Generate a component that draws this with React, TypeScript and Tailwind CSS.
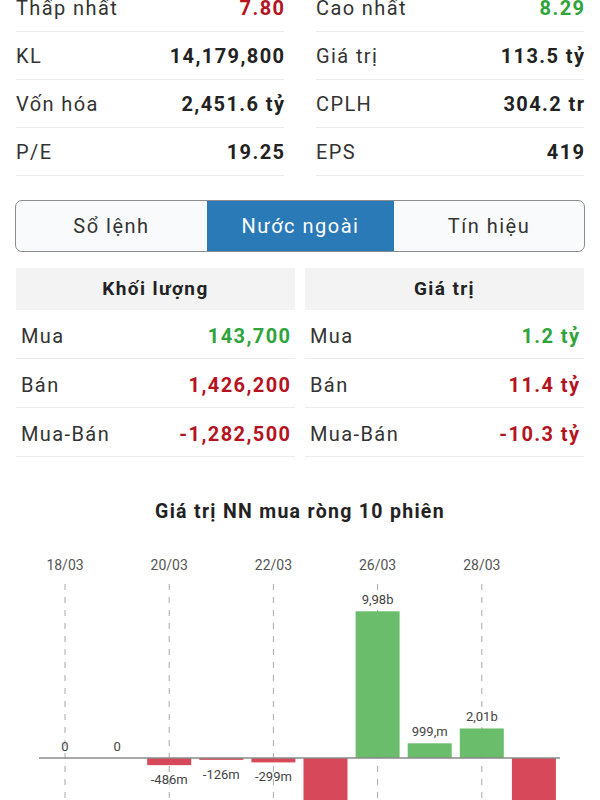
import React from "react";

const RED = "#b5141f";
const GREEN = "#2ea43a";

type Stat = { label: string; value: string; color?: string };

const left: Stat[] = [
  { label: "Thấp nhất", value: "7.80", color: RED },
  { label: "KL", value: "14,179,800" },
  { label: "Vốn hóa", value: "2,451.6 tỷ" },
  { label: "P/E", value: "19.25" },
];
const right: Stat[] = [
  { label: "Cao nhất", value: "8.29", color: GREEN },
  { label: "Giá trị", value: "113.5 tỷ" },
  { label: "CPLH", value: "304.2 tr" },
  { label: "EPS", value: "419" },
];

function StatCol({ items }: { items: Stat[] }) {
  return (
    <div className="flex flex-col">
      {items.map((s) => (
        <div
          key={s.label}
          className="flex h-[48px] items-center justify-between border-b border-[#ececec]"
        >
          <span className="text-[20px] tracking-[1.4px] text-[#333]">{s.label}</span>
          <span
            className="-mr-[1.4px] text-[20px] font-bold tracking-[1.4px] text-[#222]"
            style={s.color ? { color: s.color } : undefined}
          >
            {s.value}
          </span>
        </div>
      ))}
    </div>
  );
}

type Row = { label: string; value: string; color: string };

function FlowTable({ title, rows }: { title: string; rows: Row[] }) {
  return (
    <div className="flex flex-col">
      <div className="flex h-[42px] items-center justify-center bg-[#f3f3f3] text-[19px] font-bold tracking-[1.4px] text-[#222]">
        {title}
      </div>
      {rows.map((r) => (
        <div
          key={r.label}
          className="flex h-[49px] items-center justify-between border-b border-[#ececec] px-[5px] pt-[4px]"
        >
          <span className="text-[20px] tracking-[1.4px] text-[#333]">{r.label}</span>
          <span
            className="-mr-[1.4px] text-[20px] font-bold tracking-[1.4px]"
            style={{ color: r.color }}
          >
            {r.value}
          </span>
        </div>
      ))}
    </div>
  );
}

const bars = [0, 0, -0.486, -0.126, -0.299, -4.5, 9.98, 0.999, 2.01, -4.5];
const barLabels = ["0", "0", "-486m", "-126m", "-299m", "", "9,98b", "999,m", "2,01b", ""];
const dates: [number, string][] = [
  [0, "18/03"],
  [2, "20/03"],
  [4, "22/03"],
  [6, "26/03"],
  [8, "28/03"],
];

function Chart() {
  const base = 228;
  const scale = 14.7;
  const cx = (i: number) => 65 + 52.1 * i;
  return (
    <svg width="600" height="280" viewBox="0 0 600 280" className="block">
      {dates.map(([i, d]) => (
        <g key={d}>
          <text
            x={cx(i)}
            y={40}
            textAnchor="middle"
            fontSize="14"
            fill="#555"
            fontFamily="Roboto, sans-serif"
          >
            {d}
          </text>
          <line
            x1={cx(i)}
            x2={cx(i)}
            y1={54}
            y2={280}
            stroke="#a8a8a8"
            strokeWidth="1"
            strokeDasharray="6 7"
          />
        </g>
      ))}
      {bars.map((v, i) => {
        const h = Math.abs(v) * scale;
        const y = v >= 0 ? base - h : base;
        return (
          <rect
            key={i}
            x={cx(i) - 22}
            y={y}
            width={44}
            height={h}
            fill={v >= 0 ? "#6abd6a" : "#d6485a"}
          />
        );
      })}
      <line x1={39} x2={560} y1={base} y2={base} stroke="#8a8a8a" strokeWidth="1.5" />
      {bars.map((v, i) => {
        if (!barLabels[i]) return null;
        const h = Math.abs(v) * scale;
        const y = v >= 0 ? base - h - 7 : base + h + 19;
        return (
          <text
            key={i}
            x={cx(i)}
            y={y}
            textAnchor="middle"
            fontSize="13"
            fill="#444"
            fontFamily="Roboto, sans-serif"
          >
            {barLabels[i]}
          </text>
        );
      })}
    </svg>
  );
}

export default function App() {
  return (
    <div
      className="h-[800px] w-[600px] overflow-hidden bg-white"
      style={{ fontFamily: "Roboto, 'Noto Sans', sans-serif" }}
    >
      <div className="-mt-[16px] grid grid-cols-2 gap-[32px] px-[16px]">
        <StatCol items={left} />
        <StatCol items={right} />
      </div>

      <div className="mx-[15px] mt-[24px] grid h-[52px] grid-cols-[191px_187px_1fr] overflow-hidden rounded-[7px] border border-[#8c8c8c] bg-[#f9fafb]">
        <div className="flex items-center justify-center text-[20px] tracking-[1.5px] text-[#333]">
          Sổ lệnh
        </div>
        <div className="flex items-center justify-center bg-[#2a7ab8] text-[20px] tracking-[1.5px] text-white">
          Nước ngoài
        </div>
        <div className="flex items-center justify-center text-[20px] tracking-[1.5px] text-[#333]">
          Tín hiệu
        </div>
      </div>

      <div className="mt-[16px] grid grid-cols-2 gap-[10px] px-[16px]">
        <FlowTable
          title="Khối lượng"
          rows={[
            { label: "Mua", value: "143,700", color: GREEN },
            { label: "Bán", value: "1,426,200", color: RED },
            { label: "Mua-Bán", value: "-1,282,500", color: RED },
          ]}
        />
        <FlowTable
          title="Giá trị"
          rows={[
            { label: "Mua", value: "1.2 tỷ", color: GREEN },
            { label: "Bán", value: "11.4 tỷ", color: RED },
            { label: "Mua-Bán", value: "-10.3 tỷ", color: RED },
          ]}
        />
      </div>

      <div className="mt-[43px] text-center text-[19.5px] font-bold leading-[24px] tracking-[1.3px] text-[#222]">
        Giá trị NN mua ròng 10 phiên
      </div>
      <div className="mt-[6px]">
        <Chart />
      </div>
    </div>
  );
}
